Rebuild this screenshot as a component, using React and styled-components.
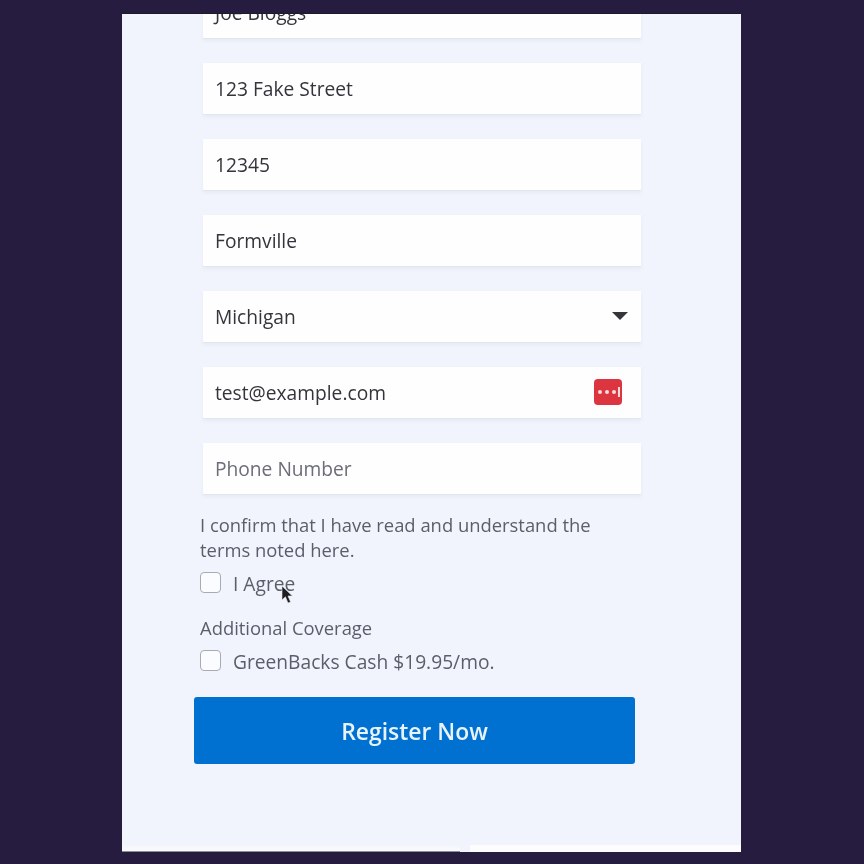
import React from 'react';
import styled, { createGlobalStyle } from 'styled-components';

const GlobalStyle = createGlobalStyle`
  html, body {
    margin: 0;
    padding: 0;
    background: #261c3f;
  }
  * {
    box-sizing: border-box;
  }
`;

const fields = [
  { value: 'Joe Bloggs' },
  { value: '123 Fake Street' },
  { value: '12345' },
  { value: 'Formville' },
  { value: 'Michigan', select: true },
  { value: 'test@example.com', keeper: true },
  { value: 'Phone Number', placeholder: true },
];

const App = () => {
  return (
    <>
      <GlobalStyle />
      <Page>
        <Panel>
          <Form>
            <Fields>
              {fields.map((f) => (
                <Field key={f.value} $select={f.select}>
                  <FieldText $placeholder={f.placeholder}>{f.value}</FieldText>
                  {f.select && <Caret />}
                  {f.keeper && (
                    <KeeperIcon viewBox="0 0 28 26">
                      <rect width="28" height="26" rx="4" fill="#dc3540" />
                      <circle cx="6" cy="13" r="2" fill="#f6dcdc" />
                      <circle cx="13" cy="13" r="2" fill="#f6dcdc" />
                      <circle cx="20" cy="13" r="2" fill="#f6dcdc" />
                      <rect x="24" y="8" width="2" height="10" fill="#f6dcdc" />
                    </KeeperIcon>
                  )}
                </Field>
              ))}
            </Fields>
            <Terms>I confirm that I have read and understand the terms noted here.</Terms>
            <CheckRow>
              <CheckBox />
              <CheckLabel>I Agree</CheckLabel>
              <Cursor viewBox="0 0 12 20">
                <path d="M1 1 L1 15 L4.4 11.8 L7 18 L9.6 17 L7 11 L11.4 11 Z" fill="#1d1d22" stroke="#e8e8ee" strokeWidth="0.6" />
              </Cursor>
            </CheckRow>
            <SectionLabel>Additional Coverage</SectionLabel>
            <CheckRow>
              <CheckBox />
              <CheckLabel>GreenBacks Cash $19.95/mo.</CheckLabel>
            </CheckRow>
            <RegisterBtn>Register Now</RegisterBtn>
          </Form>
          <BottomEdge>
            <EdgeLeft />
            <EdgeRight />
          </BottomEdge>
        </Panel>
      </Page>
    </>
  );
};

export default App;

const Page = styled.div`
  width: 864px;
  height: 864px;
  padding: 13px 123px 12px 122px;
  background: #261c3f;
  overflow: hidden;
`;

const Panel = styled.div`
  display: flex;
  flex-direction: column;
  width: 100%;
  height: 100%;
  background: #f1f4fd;
  border-top: 1px solid #1d1a2c;
  overflow: hidden;
`;

const Form = styled.div`
  flex: 1;
  min-height: 0;
  display: flex;
  flex-direction: column;
  margin-top: -27px;
  padding: 0 106px 0 78px;
  font-family: "Open Sans", sans-serif;
  filter: blur(0.35px);
`;

const Fields = styled.div`
  display: flex;
  flex-direction: column;
  gap: 24px;
  margin-left: 3px;
`;

const Field = styled.div`
  display: flex;
  align-items: center;
  justify-content: space-between;
  width: 438px;
  height: 52px;
  padding: 0 ${(p) => (p.$select ? '13px' : '19px')} 0 12px;
  background: #fefeff;
  border-bottom: 1px solid #e4e6ee;
  box-shadow: 0 2px 4px rgba(120, 125, 150, 0.08);
`;

const FieldText = styled.span`
  font-size: 19.2px;
  color: ${(p) => (p.$placeholder ? '#6b6e78' : '#33353b')};
`;

const Caret = styled.span`
  width: 0;
  height: 0;
  border-left: 8px solid transparent;
  border-right: 8px solid transparent;
  border-top: 8px solid #35363c;
  margin-top: -2px;
`;

const KeeperIcon = styled.svg`
  width: 28px;
  height: 26px;
  margin-top: -1px;
`;

const Terms = styled.p`
  margin: 17px 0 0;
  font-size: 18.4px;
  line-height: 25px;
  color: #5b5e69;
  width: 420px;
`;

const CheckRow = styled.div`
  position: relative;
  display: flex;
  align-items: center;
  gap: 12px;
  height: 24px;
  margin-top: 9px;
`;

const CheckBox = styled.span`
  width: 21px;
  height: 21px;
  margin-bottom: 2px;
  background: #fbfcff;
  border: 1.5px solid #a9abb4;
  border-radius: 4px;
`;

const CheckLabel = styled.span`
  font-size: 19.2px;
  color: #5b5e69;
`;

// pointer sits on top of the label
const Cursor = styled.svg`
  position: absolute;
  left: 81px;
  top: 14px;
  width: 12px;
  height: 20px;
`;

const SectionLabel = styled.div`
  margin-top: 20px;
  font-size: 18.4px;
  line-height: 25px;
  color: #5b5e69;
`;

const RegisterBtn = styled.button`
  flex-shrink: 0;
  width: 441px;
  height: 67px;
  margin: 24px 0 0 -6px;
  padding: 2px 0 0;
  background: #0071d1;
  border: none;
  border-radius: 3px;
  font-family: "Open Sans", sans-serif;
  font-size: 22.9px;
  font-weight: 600;
  color: #e9f3fb;
`;

const BottomEdge = styled.div`
  flex-shrink: 0;
  display: flex;
  align-items: flex-end;
  height: 7px;
`;

const EdgeLeft = styled.div`
  width: 338px;
  height: 7px;
  background: linear-gradient(#f3f5fb, #fafafc 80%, #8d8e96 85%);
`;

const EdgeRight = styled.div`
  flex: 1;
  height: 7px;
  margin-left: 10px;
  background: #fdfdff;
`;
